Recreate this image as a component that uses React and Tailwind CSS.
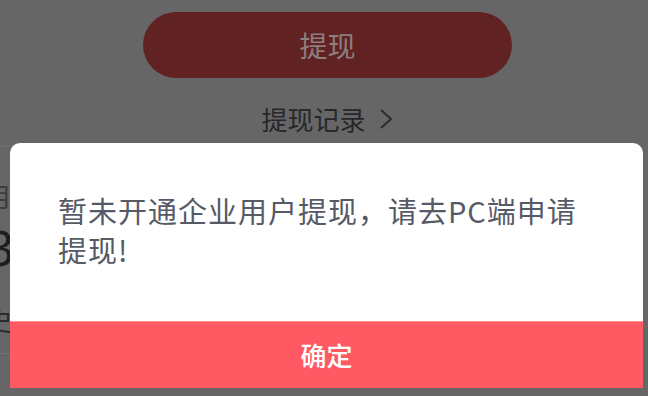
import React from 'react';

const cjk = { fontFamily: '"Noto Sans CJK SC", "Noto Sans", sans-serif' };

const WithdrawPage = () => (
  <div className="relative w-[648px] h-[396px] overflow-hidden bg-[#666666]" style={cjk}>
    {/* page behind the dialog */}
    <div className="flex flex-col items-center pt-[12px] pl-[7px]">
      <button className="w-[369px] h-[66px] rounded-full bg-[#612224] text-[28px] leading-none text-[#8e7e7f]">
        提现
      </button>
      <div className="mt-[26px] flex items-center gap-[12px] text-[26px] leading-[30px] text-[#27272b]">
        <span>提现记录</span>
        <svg width="16" height="22" viewBox="0 0 16 22" fill="none" stroke="#2c2c30" strokeWidth="2">
          <path d="M3 2l10 9-10 9" />
        </svg>
      </div>
    </div>

    <div className="mt-[12px] h-px bg-[#707070] w-[20px]" />
    <div className="-ml-[14px] flex flex-col text-[#2d2d2d]">
      <span className="mt-[34px] text-[26px] leading-[30px] text-[#3c3c3c]">月</span>
      <span className="mt-[8px] text-[50px] leading-[56px] text-[#1e1e1e]" style={{ fontFamily: '"Noto Sans", sans-serif' }}>3</span>
      <span className="mt-[30px] text-[26px] leading-[30px] text-[#2a2a2a]">史</span>
    </div>
    <div className="mt-[18px] h-px bg-[#727272] w-[20px]" />
    <div className="flex mt-[8px]">
      <svg width="648" height="12" viewBox="0 0 648 12" fill="none" stroke="#333" strokeWidth="1">
        <path d="M346 2 Q341 6 339 12" />
        <path d="M504 1 Q510 6 513 12" />
        <path d="M527 2 Q523 6 520 12" />
      </svg>
    </div>

    {/* dialog */}
    <div className="absolute left-[10px] top-[143px] w-[633px] rounded-t-[10px] bg-white overflow-hidden flex flex-col">
      <div className="h-[178px] pt-[48px] pl-[48px] pr-[46px] text-[29px] leading-[39px] tracking-[1px] text-[#565a66]">
        暂未开通企业用户提现，请去PC端申请提现!
      </div>
      <button className="h-[67px] bg-[#ff5a64] border-t border-[#ff9096] text-white text-[26px] font-medium leading-none">
        确定
      </button>
    </div>
  </div>
);

export default function App() {
  return <WithdrawPage />;
}
